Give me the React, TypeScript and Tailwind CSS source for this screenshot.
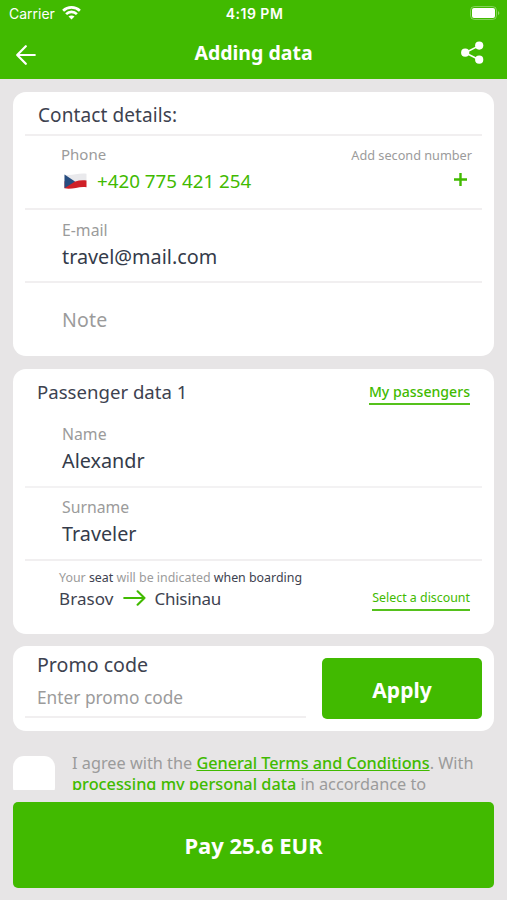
import React from 'react';

interface FieldProps {
  label: string;
  value: string;
}

const Field: React.FC<FieldProps> = ({ label, value }) => (
  <div className="pl-[37px]">
    <div className="h-5 text-[15.8px] leading-[21px] text-[#9b9b9b]">{label}</div>
    <div className="mt-1 h-6 text-[19.8px] leading-[25px] text-[#343b4a]">{value}</div>
  </div>
);

const WifiIcon = () => (
  <svg className="h-[14px] w-[19px]" viewBox="0 0 19 14" fill="none" stroke="white" strokeWidth="2.7">
    <path d="M1.1 4.7C5.8 0.3 13.2 0.3 17.9 4.7" />
    <path d="M4.1 8.1C7.1 5.2 11.9 5.2 14.9 8.1" />
    <path d="M9.5 13.6L6.5 10.6C8.1 9 10.9 9 12.5 10.6Z" fill="white" stroke="none" />
  </svg>
);

const BatteryIcon = () => (
  <svg className="h-[14px] w-[30px]" viewBox="0 0 30 14">
    <rect x="0.5" y="0.5" width="26" height="13" rx="4" fill="none" stroke="white" strokeOpacity="0.35" />
    <rect x="2" y="2" width="23" height="10" rx="2" fill="white" />
    <path d="M28 5V9.2C29.8 8.4 29.8 5.8 28 5Z" fill="white" fillOpacity="0.4" />
  </svg>
);

const BackIcon = () => (
  <svg className="h-5 w-5" viewBox="0 0 20 20" fill="none" stroke="white" strokeWidth="2.2" strokeLinecap="round" strokeLinejoin="round">
    <path d="M18.8 10H1.2M9.8 1.2L1.2 10L9.8 18.8" />
  </svg>
);

const ShareIcon = () => (
  <svg className="h-[23px] w-[23px]" viewBox="0 0 23 23" fill="white">
    <path d="M18.2 4.6L4.2 11.7L18.2 18.7" fill="none" stroke="white" strokeWidth="1.6" />
    <circle cx="18.2" cy="4.6" r="4.1" />
    <circle cx="4.2" cy="11.7" r="4.1" />
    <circle cx="18.2" cy="18.7" r="4.1" />
  </svg>
);

const CzechFlag = () => (
  <svg className="h-4 w-[23px]" viewBox="0 0 23 16">
    <path d="M0.5 1.4C7 3.4 14 -0.4 22.5 0.8V8H0.5Z" fill="#e9e9ec" />
    <path d="M0.5 8.2L11 8.4C15 7.4 19 6.8 22.5 7.6V14.2C15 12.8 8 17 0.5 15.2Z" fill="#cf2027" />
    <path d="M0.5 1.4L11 8.4L0.5 15.2Z" fill="#274d80" />
  </svg>
);

const RouteArrow = () => (
  <svg className="-mt-[3px] h-4 w-[23px]" viewBox="0 0 23 16" fill="none" stroke="#41ba00" strokeWidth="2.1" strokeLinecap="round" strokeLinejoin="round">
    <path d="M1.2 8H21.5M14.6 1.3L21.5 8L14.6 14.7" />
  </svg>
);

const App: React.FC = () => {
  return (
    <div className="flex h-[900px] w-[507px] flex-col overflow-hidden bg-[#e7e5e6] font-['Noto_Sans',sans-serif]">
      <header className="h-[79px] shrink-0 bg-[#41ba00] text-white">
        <div className="grid h-7 grid-cols-3 items-center pl-[9px] pr-[7px] font-['Inter',sans-serif] text-[14px]">
          <div className="flex items-center gap-[7px]">
            <span className="-mt-[2px]">Carrier</span>
            <span className="-mt-[3px]"><WifiIcon /></span>
          </div>
          <div className="-mt-[2px] text-center text-[14px] font-semibold tracking-[0.5px]">4:19 PM</div>
          <div className="flex justify-end">
            <span className="-mt-[2px]"><BatteryIcon /></span>
          </div>
        </div>
        <div className="grid h-12 grid-cols-[1fr_auto_1fr] items-center pl-4 pr-[23px]">
          <button className="justify-self-start pt-[6px]"><BackIcon /></button>
          <h1 className="pl-[7px] pt-[2px] text-[19.5px] font-bold leading-6">Adding data</h1>
          <button className="justify-self-end"><ShareIcon /></button>
        </div>
      </header>

      <main className="h-[711px] shrink-0 overflow-hidden px-[13px] pt-[13px]">
        <section className="h-[264px] rounded-[13px] bg-white px-3">
          <div className="h-[44px] border-b-2 border-[#f1eff0] pl-[13px] pt-[11px] text-[19px] leading-[25px] tracking-[0.1px] text-[#3d424f]">
            Contact details:
          </div>
          <div className="flex h-[74px] justify-between border-b-2 border-[#f1eff0] pl-[36px] pr-[10px] pt-[9px]">
            <div>
              <div className="h-5 text-[15px] leading-[19px] text-[#9b9b9b]">Phone</div>
              <div className="mt-1 flex h-6 items-center gap-[10px] pl-[3px] text-[18.8px] leading-6 text-[#41ba00]">
                <CzechFlag />
                <span>+420 775 421 254</span>
              </div>
            </div>
            <div className="flex flex-col items-end text-[12.7px] leading-5 text-[#9b9b9b]">
              <span>Add second number</span>
              <svg className="mr-[5px] mt-2 h-[13px] w-[13px]" viewBox="0 0 13 13" stroke="#41ba00" strokeWidth="2.4">
                <path d="M6.5 0V13M0 6.5H13" />
              </svg>
            </div>
          </div>
          <div className="h-[73px] border-b-2 border-[#f1eff0] pt-[10px]">
            <Field label="E-mail" value="travel@mail.com" />
          </div>
          <div className="pl-[37px] pt-[25px] text-[19.5px] leading-6 tracking-[0.2px] text-[#9b9b9b]">Note</div>
        </section>

        <section className="mt-[13px] h-[265px] rounded-[13px] bg-white px-3">
          <div className="flex h-[55px] items-start justify-between pl-[12px] pr-3 pt-[11px] leading-6">
            <h2 className="text-[18.6px] text-[#3d424f]">Passenger data 1</h2>
            <a className="h-[25px] border-b-2 border-[#55c11c] text-[14.1px] font-medium text-[#41ba00]">My passengers</a>
          </div>
          <div className="h-[64px] border-b-2 border-[#f3f2f3]">
            <Field label="Name" value="Alexandr" />
          </div>
          <div className="h-[73px] border-b-2 border-[#f1eff0] pt-[9px]">
            <Field label="Surname" value="Traveler" />
          </div>
          <div className="flex justify-between pl-[34px] pr-3 pt-[7px]">
            <div>
              <p className="text-[12.4px] leading-5 text-[#9b9b9b]">
                Your <span className="text-[#3d424f]">seat</span> will be indicated <span className="text-[#3d424f]">when boarding</span>
              </p>
              <div className="flex items-center gap-[9px] text-[17px] leading-[22px] text-[#3d424f]">
                <span className="tracking-[0.1px]">Brasov</span>
                <RouteArrow />
                <span className="tracking-[-0.3px]">Chisinau</span>
              </div>
            </div>
            <a className="mt-5 h-[23px] border-b-2 border-[#55c11c] text-[12.4px] leading-5 text-[#41ba00]">Select a discount</a>
          </div>
        </section>

        <section className="mt-3 flex h-[85px] justify-between rounded-[13px] bg-white px-3">
          <div className="h-[72px] w-[281px] border-b-2 border-[#f1eff0] pl-[12px] pt-[6px]">
            <div className="text-[19.6px] leading-[25px] text-[#3d424f]">Promo code</div>
            <div className="mt-2 text-[17.3px] leading-[26px] text-[#9b9b9b]">Enter promo code</div>
          </div>
          <button className="mt-3 h-[61px] w-[160px] rounded-[5px] bg-[#41ba00] pt-[5px] text-[21px] font-bold text-white">Apply</button>
        </section>

        <section className="mt-[25px] flex gap-[17px]">
          <div className="h-[42px] w-[42px] shrink-0 rounded-[11px] bg-white" />
          <p className="-mt-[3px] whitespace-nowrap text-[16.3px] leading-[21px] text-[#9b9b9b]">
            I agree with the <a className="font-medium tracking-[-0.05px] text-[#41ba00] underline">General Terms and Conditions</a>. With
            <br />
            <a className="font-medium text-[#41ba00] underline">processing my personal data</a> in accordance to
          </p>
        </section>
      </main>

      <button className="mx-[13px] mt-3 h-[86px] shrink-0 rounded-[5px] bg-[#41ba00] pt-[1px] text-[22px] font-bold text-white">
        Pay 25.6 EUR
      </button>
    </div>
  );
};

export default App;
